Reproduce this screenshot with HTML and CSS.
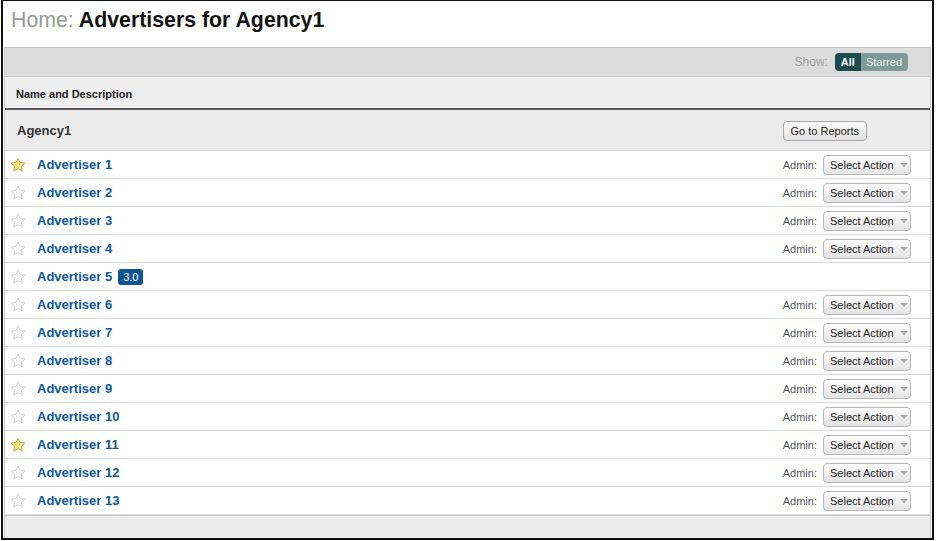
FILE: index.html
```html
<!DOCTYPE html>
<html>
<head>
<meta charset="utf-8">
<link rel="stylesheet" href="styles.css">
</head>
<body>
<div class="frame">
  <h1 class="title"><span class="home">Home:</span> Advertisers for Agency1</h1>
  <div class="panel">
    <div class="toolbar">
      <span class="show-label">Show:</span>
      <div class="seg"><span class="seg-on">All</span><span class="seg-off">Starred</span></div>
    </div>
    <div class="thead">Name and Description</div>
    <div class="group">
      <span class="group-name">Agency1</span>
      <span class="btn">Go to Reports</span>
    </div>
    <div class="rows" id="rows"></div>
    <div class="footer"></div>
  </div>
</div>
<script>
var starred = {1: true, 11: true};
var rows = document.getElementById('rows');
var html = '';
for (var i = 1; i <= 13; i++) {
  var star = starred[i]
    ? '<svg class="star" viewBox="0 0 16 16"><path d="M8 1.2l2.05 4.35 4.75.55-3.5 3.25.95 4.7L8 11.7l-4.25 2.35.95-4.7-3.5-3.25 4.75-.55z" fill="#f3e27a" stroke="#b9a24a" stroke-width="0.9" stroke-linejoin="round"/></svg>'
    : '<svg class="star" viewBox="0 0 16 16"><path d="M8 1.2l2.05 4.35 4.75.55-3.5 3.25.95 4.7L8 11.7l-4.25 2.35.95-4.7-3.5-3.25 4.75-.55z" fill="#fff" stroke="#c8c8c8" stroke-width="0.9" stroke-linejoin="round"/></svg>';
  var badge = i === 5 ? '<span class="badge">3.0</span>' : '';
  var admin = i === 5 ? '' : '<span class="admin">Admin:</span><span class="select">Select Action<span class="caret"></span></span>';
  html += '<div class="row"><div class="left">' + star + '<a class="name">Advertiser ' + i + '</a>' + badge + '</div><div class="right">' + admin + '</div></div>';
}
rows.innerHTML = html;
</script>
</body>
</html>
```

FILE: styles.css
```css
* { box-sizing: border-box; }
html, body { margin: 0; padding: 0; background: #fff; }
body { font-family: "Liberation Sans", Arial, sans-serif; }

.frame {
  width: 933px;
  height: 540px;
  margin-left: 1px;
  border: 2px solid #111;
  border-top-width: 1px;
  border-right-width: 2px;
  display: flex;
  flex-direction: column;
}

.title {
  margin: 0;
  height: 46px;
  padding: 7px 0 0 8px;
  font-size: 21.3px;
  font-weight: bold;
  color: #111;
  line-height: 24px;
}
.home { color: #999; font-weight: normal; }

.panel {
  margin-left: 1px;
  margin-right: 1px;
  border-left: 1px solid #c8c8c8;
  border-right: 1px solid #c8c8c8;
  flex: 1;
  display: flex;
  flex-direction: column;
}

.toolbar {
  height: 30px;
  background: #dcdcdc;
  border-top: 1px solid #c4c4c4;
  border-bottom: 1px solid #c8c8c8;
  display: flex;
  align-items: center;
  justify-content: flex-end;
  padding-right: 22px;
}
.show-label { font-size: 12px; color: #a0a0a0; margin-right: 7px; }
.seg { display: flex; height: 18px; border-radius: 4px; overflow: hidden; font-size: 11px; line-height: 18px; }
.seg-on { background: #1c4d4c; color: #fff; font-weight: bold; padding: 0 6px 0 6px; }
.seg-off { background: #7d9c98; color: #f2f2f2; padding: 0 6px 0 5px; }

.thead {
  height: 33px;
  background: #efefef;
  border-bottom: 2px solid #5a5a5a;
  font-size: 11px;
  font-weight: bold;
  color: #222;
  padding-left: 11px;
  line-height: 34px;
}

.group {
  height: 41px;
  background: #ebebeb;
  border-bottom: 1px solid #d8d8d8;
  display: flex;
  align-items: center;
  justify-content: space-between;
  padding: 1px 63px 0 12px;
}
.group-name { font-size: 13px; font-weight: bold; color: #333; }
.btn {
  height: 20px;
  padding: 0 7px;
  font-size: 11px;
  line-height: 18px;
  color: #222;
  border: 1px solid #a8a8a8;
  border-radius: 4px;
  background: linear-gradient(#fbfbfb, #e2e2e2);
}

.row {
  height: 28px;
  border-bottom: 1px solid #dadada;
  display: flex;
  align-items: center;
  justify-content: space-between;
  padding: 0 19px 0 5px;
}
.left { display: flex; align-items: center; }
.star { width: 16px; height: 16px; margin-right: 11px; }
.name { font-size: 13px; font-weight: bold; color: #0d5996; }
.badge {
  margin-left: 6px;
  background: #0f5592;
  color: #fff;
  font-size: 11px;
  line-height: 16px;
  height: 16px;
  padding: 0 5px;
  border-radius: 3px;
}
.right { display: flex; align-items: center; }
.admin { font-size: 11px; color: #555; margin-right: 6px; }
.select {
  width: 88px;
  height: 20px;
  border: 1px solid #b8b8b8;
  border-radius: 4px;
  background: linear-gradient(#fdfdfd, #e4e4e4);
  font-size: 11px;
  line-height: 18px;
  color: #222;
  padding-left: 6px;
  display: flex;
  align-items: center;
}
.caret {
  margin-left: 6px;
  width: 0; height: 0;
  border-left: 4px solid transparent;
  border-right: 4px solid transparent;
  border-top: 4px solid #a8a8a8;
}

.footer {
  flex: 1;
  background: #ebebeb;
  border-top: 1px solid #c8c8c8;
}
```
